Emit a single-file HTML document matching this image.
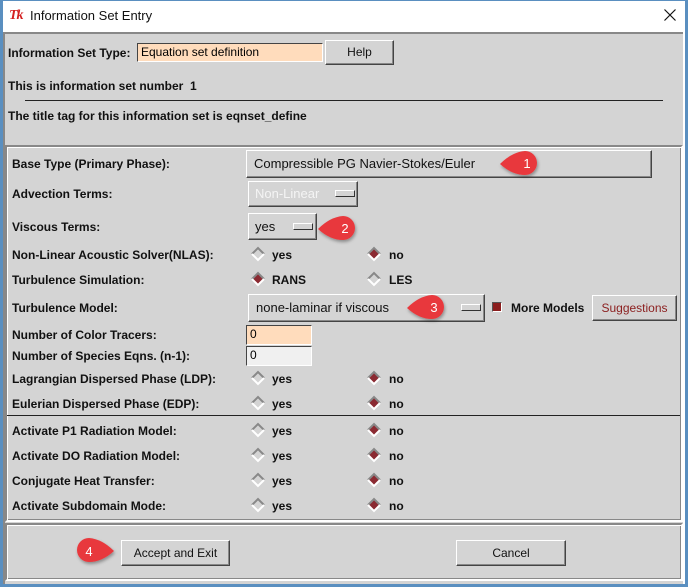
<!DOCTYPE html>
<html><head><meta charset="utf-8"><style>
*{margin:0;padding:0;box-sizing:border-box}
body{width:688px;height:587px;overflow:hidden;background:#d4d4d4;font-family:"Liberation Sans",Arial,sans-serif;position:relative}
.a{position:absolute;white-space:nowrap}
.b{font-weight:bold;font-size:12px;color:#111}
.lab{position:absolute;left:12px;font-weight:bold;font-size:12px;color:#111;line-height:14px}
.btn{position:absolute;background:#d4d4d4;border:1px solid;border-color:#fff #444 #444 #fff;box-shadow:inset -1px -1px 0 #888;font-size:12px;color:#111;text-align:center}
.frame{position:absolute;border:2px solid;border-color:#888 #fff #fff #888;box-shadow:inset 1px 1px 0 #fff,inset -1px -1px 0 #888}
.ind{position:absolute;width:20px;height:7px;background:#d4d4d4;border:1px solid;border-color:#fff #333 #333 #fff}
.ent{position:absolute;border:1px solid;border-color:#444 #fff #fff #444;font-size:12px;padding-left:3px;line-height:17px}
.r{position:absolute;font-weight:bold;font-size:12px;color:#111;line-height:14px}
</style></head><body>
<div class="a" style="left:0;top:0;width:688px;height:32px;background:#fff"></div>
<div class="a" style="left:0;top:0;width:3px;height:587px;background:#5a8fc0"></div>
<div class="a" style="left:685px;top:0;width:3px;height:587px;background:#5a8fc0"></div>
<div class="a" style="left:0;top:584px;width:688px;height:3px;background:#5a8fc0"></div>
<div class="a" style="left:0;top:0;width:688px;height:1px;background:#5a8fc0"></div>
<div class="a" style="left:9px;top:8px;font:italic bold 14px 'Liberation Serif',serif;color:#d42020;letter-spacing:-1px">Tk</div>
<div class="a" style="left:30px;top:8px;font-size:13px;color:#111">Information Set Entry</div>
<svg class="a" style="left:664px;top:9px" width="12" height="12"><path d="M0.5 0.5 L11.5 11.5 M11.5 0.5 L0.5 11.5" stroke="#111" stroke-width="1.2"/></svg>
<div class="a" style="left:3px;top:32px;width:682px;height:2px;background:#888"></div>
<div class="a" style="left:3px;top:32px;width:2px;height:552px;background:#888"></div>
<div class="a" style="left:683px;top:32px;width:2px;height:552px;background:#fff"></div>

<div class="a b" style="left:8px;top:46px">Information Set Type:</div>
<div class="ent" style="left:137px;top:43px;width:186px;height:19px;background:#ffdcbc">Equation set definition</div>
<div class="btn" style="left:325px;top:40px;width:69px;height:25px;line-height:23px">Help</div>
<div class="a b" style="left:8px;top:79px">This is information set number&nbsp; 1</div>
<div class="a" style="left:25px;top:100px;width:638px;height:1px;background:#222"></div>
<div class="a b" style="left:8px;top:109px">The title tag for this information set is eqnset_define</div>

<div class="frame" style="left:5px;top:145px;width:678px;height:377px"></div>
<div class="a" style="left:7px;top:415px;width:673px;height:1px;background:#222"></div>
<div class="frame" style="left:5px;top:523px;width:678px;height:58px"></div>

<div class="lab" style="top:157px">Base Type (Primary Phase):</div>
<div class="lab" style="top:187px">Advection Terms:</div>
<div class="lab" style="top:220px">Viscous Terms:</div>
<div class="lab" style="top:248px">Non-Linear Acoustic Solver(NLAS):</div>
<div class="lab" style="top:273px">Turbulence Simulation:</div>
<div class="lab" style="top:301px">Turbulence Model:</div>
<div class="lab" style="top:328px">Number of Color Tracers:</div>
<div class="lab" style="top:349px">Number of Species Eqns. (n-1):</div>
<div class="lab" style="top:372px">Lagrangian Dispersed Phase (LDP):</div>
<div class="lab" style="top:397px">Eulerian Dispersed Phase (EDP):</div>
<div class="lab" style="top:424px">Activate P1 Radiation Model:</div>
<div class="lab" style="top:449px">Activate DO Radiation Model:</div>
<div class="lab" style="top:474px">Conjugate Heat Transfer:</div>
<div class="lab" style="top:499px">Activate Subdomain Mode:</div>

<div class="btn" style="left:246px;top:150px;width:406px;height:28px;line-height:26px;text-align:left;padding-left:7px;font-size:13px">Compressible PG Navier-Stokes/Euler</div>
<div class="btn" style="left:248px;top:181px;width:110px;height:26px;line-height:24px;text-align:left;padding-left:6px;font-size:13px;color:#f4f4f4">Non-Linear</div>
<div class="ind" style="left:335px;top:190px"></div>
<div class="btn" style="left:248px;top:213px;width:69px;height:27px;line-height:25px;text-align:left;padding-left:6px;font-size:13px">yes</div>
<div class="ind" style="left:293px;top:223px"></div>
<div class="btn" style="left:248px;top:294px;width:237px;height:28px;line-height:26px;text-align:left;padding-left:7px;font-size:13px">none-laminar if viscous</div>
<div class="ind" style="left:461px;top:304px"></div>
<div class="a" style="left:492px;top:302px;width:10px;height:10px;background:#8b1e1e;border:1px solid;border-color:#555 #fff #fff #555"></div>
<div class="r" style="left:511px;top:301px">More Models</div>
<div class="btn" style="left:592px;top:295px;width:85px;height:26px;line-height:24px;color:#8b1e1e">Suggestions</div>
<div class="ent" style="left:246px;top:325px;width:66px;height:20px;background:#ffdcbc">0</div>
<div class="ent" style="left:246px;top:346px;width:66px;height:20px;background:#f0f0f0">0</div>

<svg width="0" height="0" style="position:absolute"><defs>
<g id="off"><path d="M6 0 L12 6 L6 12 L0 6Z" fill="#d4d4d4"/><path d="M0 6 L6 0 L12 6" fill="none" stroke="#888" stroke-width="2"/><path d="M0 6 L6 12 L12 6" fill="none" stroke="#fff" stroke-width="2"/></g>
<g id="on"><path d="M6 0 L12 6 L6 12 L0 6Z" fill="#8b2a32"/><path d="M0 6 L6 0 L12 6" fill="none" stroke="#888" stroke-width="2"/><path d="M0 6 L6 12 L12 6" fill="none" stroke="#fff" stroke-width="2"/></g>
</defs></svg>
<svg class="a" style="left:0;top:0" width="688" height="587">
<use href="#off" x="252" y="248"/><use href="#on" x="368" y="248"/>
<use href="#on" x="252" y="273"/><use href="#off" x="368" y="273"/>
<use href="#off" x="252" y="372"/><use href="#on" x="368" y="372"/>
<use href="#off" x="252" y="397"/><use href="#on" x="368" y="397"/>
<use href="#off" x="252" y="424"/><use href="#on" x="368" y="424"/>
<use href="#off" x="252" y="449"/><use href="#on" x="368" y="449"/>
<use href="#off" x="252" y="474"/><use href="#on" x="368" y="474"/>
<use href="#off" x="252" y="499"/><use href="#on" x="368" y="499"/>
</svg>
<div class="r" style="left:272px;top:248px">yes</div><div class="r" style="left:389px;top:248px">no</div>
<div class="r" style="left:272px;top:273px">RANS</div><div class="r" style="left:389px;top:273px">LES</div>
<div class="r" style="left:272px;top:372px">yes</div><div class="r" style="left:389px;top:372px">no</div>
<div class="r" style="left:272px;top:397px">yes</div><div class="r" style="left:389px;top:397px">no</div>
<div class="r" style="left:272px;top:424px">yes</div><div class="r" style="left:389px;top:424px">no</div>
<div class="r" style="left:272px;top:449px">yes</div><div class="r" style="left:389px;top:449px">no</div>
<div class="r" style="left:272px;top:474px">yes</div><div class="r" style="left:389px;top:474px">no</div>
<div class="r" style="left:272px;top:499px">yes</div><div class="r" style="left:389px;top:499px">no</div>

<div class="btn" style="left:121px;top:540px;width:109px;height:26px;line-height:24px">Accept and Exit</div>
<div class="btn" style="left:456px;top:540px;width:110px;height:26px;line-height:24px">Cancel</div>

<svg class="a" style="left:0;top:0" width="688" height="587">
<defs><filter id="sh" x="-30%" y="-30%" width="160%" height="160%"><feDropShadow dx="1" dy="2" stdDeviation="1.5" flood-color="#000" flood-opacity="0.35"/></filter></defs>
<g fill="#e8393c" filter="url(#sh)">
<path d="M500 164 Q512 152 525 151 A12 12 0 1 1 525 175 Q512 175 500 164Z"/>
<path d="M318 229 Q330 217 343 216 A12 12 0 1 1 343 240 Q330 240 318 229Z"/>
<path d="M407 308 Q419 296 432 295 A12 12 0 1 1 432 319 Q419 319 407 308Z"/>
<path d="M114 551 Q102 539 89 538 A12 12 0 1 0 89 562 Q102 562 114 551Z"/>
</g>
<g fill="#fff" font-family="Liberation Sans,sans-serif" font-size="13" text-anchor="middle">
<text x="527" y="168">1</text><text x="345" y="233">2</text><text x="434" y="312">3</text><text x="89" y="556">4</text>
</g>
</svg>
</body></html>
